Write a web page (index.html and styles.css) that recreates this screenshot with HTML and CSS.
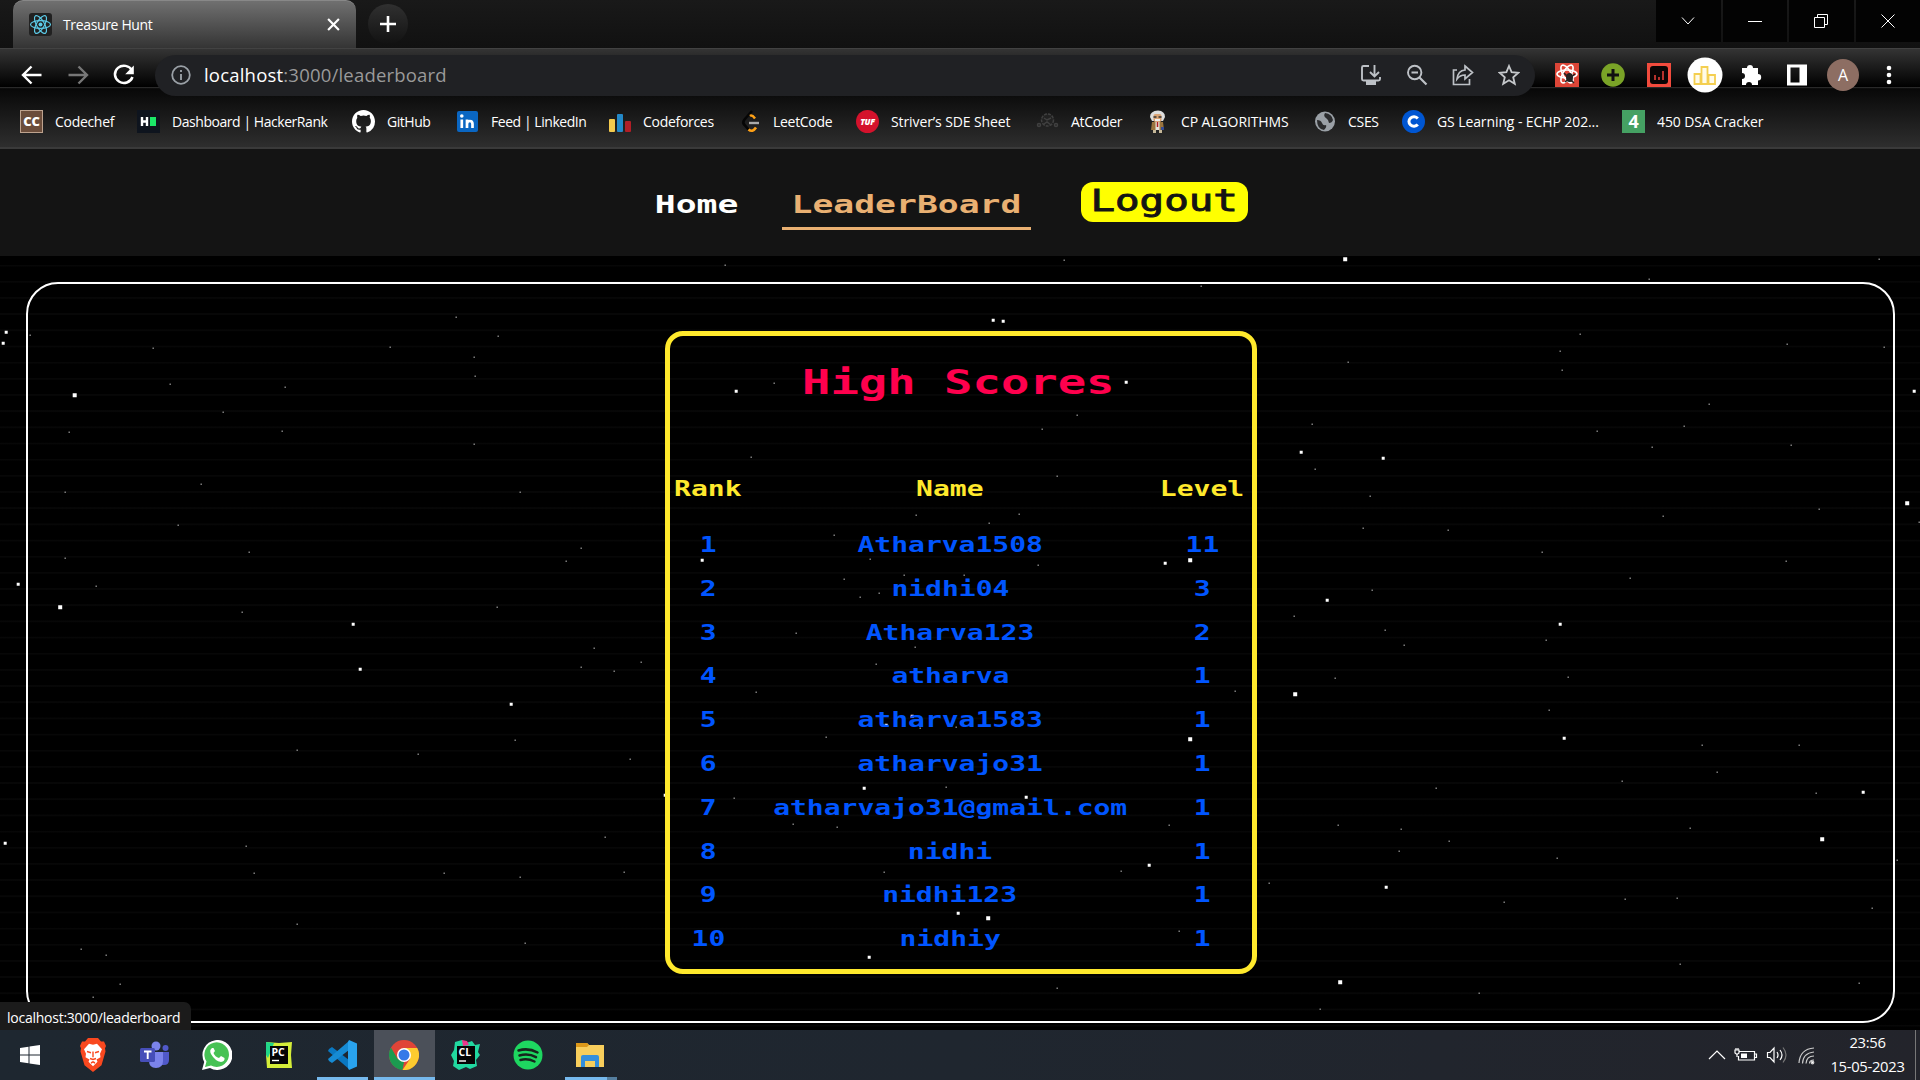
FILE: index.html
```html
<!DOCTYPE html>
<html lang="en">
<head>
<meta charset="utf-8">
<title>Treasure Hunt</title>
<link rel="stylesheet" href="styles.css">
</head>
<body>
<header class="browser">
  <div class="tabstrip">
    <div class="tab">
      <svg class="favicon" viewBox="0 0 23 23"><rect width="23" height="23" rx="3" fill="#212121"/><g fill="none" stroke="#5ccbe8" stroke-width="1.2"><ellipse cx="11.5" cy="11.5" rx="10" ry="3.9"/><ellipse cx="11.5" cy="11.5" rx="10" ry="3.9" transform="rotate(60 11.5 11.5)"/><ellipse cx="11.5" cy="11.5" rx="10" ry="3.9" transform="rotate(120 11.5 11.5)"/></g><circle cx="11.5" cy="11.5" r="2" fill="#5ccbe8"/></svg>
      <span class="tab-title">Treasure Hunt</span>
      <svg class="tab-close" viewBox="0 0 12 12"><path d="M1 1l10 10M11 1L1 11" stroke="#fff" stroke-width="2"/></svg>
    </div>
    <div class="new-tab"><svg width="18" height="18" viewBox="0 0 18 18"><path d="M9 1v16M1 9h16" stroke="#fff" stroke-width="2.6"/></svg></div>
    <div class="window-controls">
      <div class="control"><svg width="14" height="14" viewBox="0 0 14 14"><path d="M1 3.500l6 6.500 6-6.500"/></svg></div>
      <div class="control"><svg width="14" height="14" viewBox="0 0 14 14"><path d="M0 7.500h14"/></svg></div>
      <div class="control"><svg width="14" height="14" viewBox="0 0 14 14"><path d="M.5 3.500h10v10h-10zM3.500 3V.5h10v10H11"/></svg></div>
      <div class="control"><svg width="14" height="14" viewBox="0 0 14 14"><path d="M.5.5l13 13M13.500.5l-13 13"/></svg></div>
    </div>
  </div>
  <div class="toolbar">
    <div class="nav-buttons">
      <svg viewBox="0 0 24 24"><path d="M21.500 12H4M11.500 3.500L3 12l8.500 8.500" fill="none" stroke="#fff" stroke-width="2.400"/></svg>
      <svg viewBox="0 0 24 24"><path d="M2.500 12H20M12.500 3.500L21 12l-8.500 8.500" fill="none" stroke="#777" stroke-width="2.400"/></svg>
      <svg viewBox="0 0 24 24"><path d="M20 7.500A9 8.600 0 1 0 20.500 14" fill="none" stroke="#fff" stroke-width="2.500"/><path d="M21.800 2.500v8.700h-8.600z" fill="#fff"/></svg>
    </div>
    <div class="omnibox">
      <svg class="info" viewBox="0 0 20 20"><circle cx="10" cy="10" r="8.800" fill="none" stroke="#9aa0a6" stroke-width="1.800"/><path d="M10 9v6M10 5v2" stroke="#9aa0a6" stroke-width="1.900"/></svg>
      <span class="url">localhost<span class="url-path">:3000/leaderboard</span></span>
      <div class="omni-actions">
        <svg viewBox="0 0 22 22"><path d="M9 2H3.500Q2 2 2 3.500V15q0 1.500 1.500 1.500h15Q20 16.500 20 15v-2M14.500 1v11M10 8l4.500 4.500L19 8" fill="none" stroke="#bdc1c6" stroke-width="1.900"/><path d="M6 17h10v4H6z" fill="#bdc1c6"/></svg>
        <svg viewBox="0 0 22 22"><circle cx="8.700" cy="8.500" r="6.700" fill="none" stroke="#bdc1c6" stroke-width="1.900"/><path d="M5.500 8.500H12M13.500 13.500l7 7" stroke="#bdc1c6" stroke-width="2.200"/></svg>
        <svg viewBox="0 0 22 22"><path d="M5 6H1.500v14.500h16V15M13 2l7.500 6.500L13 15v-4Q8 11 5 15q1-8.500 8-9z" fill="none" stroke="#bdc1c6" stroke-width="1.700"/></svg>
        <svg viewBox="0 0 22 22"><path d="M11 2l2.600 6.200 6.700.6-5.100 4.400 1.600 6.600-5.800-3.500-5.800 3.500 1.600-6.600L1.700 8.800l6.700-.6z" fill="none" stroke="#c5c8cb" stroke-width="1.800"/></svg>
      </div>
    </div>
    <div class="extensions">
      <svg viewBox="0 0 36 36"><rect x="6" y="6" width="24" height="24" fill="#dc4537"/><g fill="none" stroke="#fff" stroke-width="1.600"><ellipse cx="18" cy="17" rx="10" ry="4"/><ellipse cx="18" cy="17" rx="10" ry="4" transform="rotate(60 18 17)"/><ellipse cx="18" cy="17" rx="10" ry="4" transform="rotate(120 18 17)"/></g><ellipse cx="20.500" cy="20.500" rx="3.500" ry="4.500" fill="#222"/><path d="M15 16l10 10M26 17l-10 8" stroke="#222" stroke-width="1.500"/></svg>
      <svg viewBox="0 0 36 36"><circle cx="18" cy="18" r="11.800" fill="#7aa327"/><path d="M18 12v12M12 18h12" stroke="#111" stroke-width="3"/></svg>
      <svg viewBox="0 0 36 36"><rect x="6" y="6" width="24" height="24" fill="#f24b3d"/><rect x="9" y="9" width="18" height="18" rx="3" fill="#0a0505"/><path d="M14 18v5M18 20v3M22 14v9" stroke="#b5312c" stroke-width="2"/></svg>
      <svg viewBox="0 0 36 36"><circle cx="18" cy="18" r="17.500" fill="#fff"/><path d="M7.500 17h6v10h-6zM14.500 10h6v17h-6zM21.500 18h6.500v9h-6.500z" fill="#fffbe8" stroke="#f4cf50" stroke-width="1.800"/></svg>
      <svg viewBox="0 0 36 36"><path d="M9 11h5a3 3 0 1 1 6 0h5v6a3.200 3.200 0 1 1 0 6.400V28h-6a3 3 0 0 0-6 0H9v-6a3 3 0 1 0 0-6z" fill="#fff"/></svg>
      <svg viewBox="0 0 36 36"><path d="M8 7.500h20v21H8zM11.500 10.500v15h9v-15z" fill="#fff" fill-rule="evenodd"/></svg>
      <svg viewBox="0 0 36 36"><circle cx="18" cy="18" r="16" fill="#8d6e63"/><text x="18" y="23.500" text-anchor="middle" font-size="16" fill="#fff">A</text></svg>
      <svg viewBox="0 0 36 36"><circle cx="18" cy="11" r="2.300" fill="#fff"/><circle cx="18" cy="18" r="2.300" fill="#fff"/><circle cx="18" cy="25" r="2.300" fill="#fff"/></svg>
    </div>
  </div>
  <div class="bookmarks">
    <div class="bookmark"><svg viewBox="0 0 23 23"><rect x=".5" y=".5" width="22" height="22" fill="#6b4d3b" stroke="#bda28e"/><text x="11.500" y="16" text-anchor="middle" font-size="13" font-weight="800" fill="#fff">CC</text></svg><span>Codechef</span></div>
    <div class="bookmark"><svg viewBox="0 0 23 23"><rect width="23" height="23" fill="#0e141e"/><path d="M5 7v9M10 7v9M5 11.500h5" stroke="#fff" stroke-width="2.400"/><path d="M13 7h6v9h-6z" fill="#1be668"/></svg><span class="tight">Dashboard | HackerRank</span></div>
    <div class="bookmark"><svg viewBox="0 0 16 16"><path fill="#fff" d="M8 0C3.580 0 0 3.580 0 8c0 3.540 2.290 6.530 5.470 7.590.4.070.55-.17.55-.38 0-.19-.01-.82-.01-1.490-2.010.37-2.530-.49-2.690-.94-.09-.23-.48-.94-.82-1.130-.28-.15-.68-.52-.01-.53.630-.01 1.080.58 1.230.82.720 1.210 1.870.87 2.330.66.070-.52.280-.87.510-1.070-1.780-.2-3.640-.89-3.640-3.950 0-.87.310-1.590.82-2.150-.08-.2-.36-1.020.08-2.120 0 0 .67-.21 2.200.82a7.600 7.600 0 0 1 4 0c1.530-1.040 2.200-.82 2.200-.82.440 1.100.160 1.920.08 2.120.510.56.820 1.270.82 2.150 0 3.070-1.870 3.750-3.650 3.950.290.250.540.730.540 1.480 0 1.070-.01 1.930-.01 2.200 0 .21.150.46.550.38A8.010 8.010 0 0 0 16 8c0-4.420-3.580-8-8-8z"/></svg><span class="tight">GitHub</span></div>
    <div class="bookmark"><svg viewBox="0 0 23 23"><rect x="1" y="1" width="21" height="21" rx="2" fill="#0a66c2"/><path d="M5.800 9.500V18M11 9.500V18M11 14q0-3 2.800-3 2.700 0 2.700 3v4" fill="none" stroke="#fff" stroke-width="2.700"/><circle cx="5.800" cy="6" r="1.800" fill="#fff"/></svg><span class="tight">Feed | LinkedIn</span></div>
    <div class="bookmark"><svg viewBox="0 0 23 23"><rect x="1" y="9" width="6" height="13" rx="1" fill="#f4cb4e"/><rect x="9" y="4" width="6" height="18" rx="1" fill="#2389c9"/><rect x="17" y="11" width="6" height="11" rx="1" fill="#b21e26"/></svg><span>Codeforces</span></div>
    <div class="bookmark"><svg viewBox="0 0 23 23"><path d="M14 1L6.500 9.500q-2.500 3 0 5.500l4 4.500" fill="none" stroke="#050505" stroke-width="2.600"/><path d="M12 6q2-1.500 5 2.500M10.500 19.500q4 3.500 7.500-2" fill="none" stroke="#ffa116" stroke-width="2.500"/><path d="M11 13h10" stroke="#aaa" stroke-width="2.400"/></svg><span>LeetCode</span></div>
    <div class="bookmark"><svg viewBox="0 0 23 23"><circle cx="11.500" cy="11.500" r="11.500" fill="#d4122c"/><text x="11.500" y="14.800" text-anchor="middle" font-size="8.500" font-weight="800" font-style="italic" fill="#fff">TUF</text></svg><span class="loose">Striver’s SDE Sheet</span></div>
    <div class="bookmark"><svg viewBox="0 0 23 23"><g fill="none" stroke="#404040" stroke-width="1.500"><circle cx="11.500" cy="10" r="6" fill="#222" stroke-dasharray="3 1"/><path d="M8 8l3 2 4-2M8 14l3-2 4 3"/><circle cx="3" cy="15" r="1.500"/><circle cx="20" cy="15" r="1.500"/></g></svg><span>AtCoder</span></div>
    <div class="bookmark"><svg viewBox="0 0 23 23"><path d="M4 7q0-6 8-6.500Q19 1 19 7l-2 4H6z" fill="#ddd"/><rect x="7.500" y="4" width="8" height="8" rx="2" fill="#d8a273"/><path d="M7.500 7h3M12.500 7h3" stroke="#333" stroke-width="1.500"/><path d="M9 10h5" stroke="#eee" stroke-width="2"/><path d="M6 12h11l1 8H5z" fill="#9a743e"/><path d="M9.500 12h4v8h-4z" fill="#e8e4dd"/><path d="M11.500 12v5" stroke="#b02020" stroke-width="1.500"/><path d="M7 20h3v3H7zM13 20h3v3h-3z" fill="#c5b798"/><path d="M15 17h3v3h-3z" fill="#364c93"/></svg><span class="loose">CP ALGORITHMS</span></div>
    <div class="bookmark"><svg viewBox="0 0 23 23"><circle cx="12" cy="11.500" r="10" fill="#9aa0a6"/><path d="M4 10q4 0 5 3t4 2q1 2-2 5-7-1-7-10zM12 3q-2 3 1 5t3 5q3 0 4-3-1-6-8-7z" fill="#2a2b2d"/></svg><span>CSES</span></div>
    <div class="bookmark"><svg viewBox="0 0 23 23"><circle cx="11.500" cy="11.500" r="11.500" fill="#0056d2"/><path d="M15.800 8.500a5 4.700 0 1 0 0 6" fill="none" stroke="#fff" stroke-width="3"/></svg><span class="loose">GS Learning - ECHP 202...</span></div>
    <div class="bookmark"><svg viewBox="0 0 23 23"><rect width="23" height="23" fill="#45a163"/><text x="11.500" y="18" text-anchor="middle" font-size="18" font-weight="700" fill="#fff">4</text></svg><span class="loose">450 DSA Cracker</span></div>
  </div>
</header>

<nav class="site-nav">
  <a class="link home"><span class="pixel">Home</span></a>
  <a class="link active"><span class="pixel">LeaderBoard</span></a>
  <button class="logout"><span class="pixel">Logout</span></button>
</nav>

<main class="space">
  <svg class="stars" viewBox="-0.2 255.8 1920 774" fill="none" stroke-linecap="square">
    <path class="star-s" d="M456 317h0M498 336h0M390 347h0M474 357h0M30 335h0M153 348h0M475 376h0M170 384h0M285 387h0M223 412h0M69 432h0M282 431h0M474 444h0M201 484h0M65 492h0M520 492h0M178 525h0M249 552h0M65 558h0M581 548h0M566 561h0M96 586h0M242 612h0M497 607h0M594 648h0M641 662h0M581 667h0M614 671h0M515 740h0M297 750h0M418 754h0M630 759h0M605 837h0M246 846h0M254 873h0M444 873h0M520 877h0M624 872h0M297 924h0M525 943h0M81 949h0M106 955h0M120 984h0M93 997h0M1879 259h0M1649 279h0M1580 334h0M1560 351h0M1562 370h0M1348 362h0M1787 344h0M1884 347h0M1709 404h0M1312 424h0M1684 426h0M1597 431h0M1652 447h0M1791 445h0M1315 469h0M1370 496h0M1819 509h0M1663 516h0M1363 528h0M1448 530h0M1919 522h0M1542 552h0M1786 561h0M1630 578h0M1372 590h0M1294 616h0M1385 630h0M1404 645h0M1546 640h0M1335 678h0M1568 677h0M1549 710h0M1702 745h0M1799 745h0M1717 772h0M1622 781h0M1436 788h0M1816 793h0M1338 825h0M1401 829h0M1690 828h0M1449 841h0M1399 851h0M1557 858h0M1897 860h0M1269 883h0M1504 902h0M1625 899h0M1677 898h0M1872 908h0M1680 964h0M1859 983h0M1479 993h0M1320 1009h0M774 383h0M902 375h0M1077 415h0M1042 429h0M751 457h0M1057 476h0M916 515h0M1019 514h0M989 523h0M834 535h0M870 559h0M1038 565h0M904 575h0M964 575h0M844 579h0M879 593h0M860 597h0M796 633h0M915 647h0M876 664h0M756 692h0M1235 691h0M920 728h0M956 727h0M826 737h0M946 787h0M734 798h0M793 824h0M837 827h0M1169 825h0M884 872h0M1121 871h0M1179 931h0M1057 988h0M725 265h0M1064 260h0M1201 286h0"/>
    <path class="star-m" d="M6 332h0M3 343h0M18 584h0M353 624h0M360 669h0M511 704h0M5 843h0M1914 391h0M1301 452h0M1383 458h0M1327 600h0M1560 624h0M1564 738h0M1863 792h0M1386 887h0M993 320h0M1003 321h0M736 391h0M1126 382h0M702 560h0M1165 563h0M912 716h0M886 725h0M864 788h0M1026 797h0M665 795h0M1149 865h0M958 913h0M869 957h0"/>
    <path class="star-l" d="M74.500 395h0M60 607h0M1345 259h0M1907 503h0M1295 694h0M1822 839h0M1340 982h0M1190 560h0M1190 739h0M988 918h0"/>
  </svg>
  <div class="frame">
    <section class="card">
      <h1 class="card-title"><span class="pixel">High Scores</span></h1>
      <div class="row head"><span class="pixel">Rank</span><span class="pixel">Name</span><span class="pixel">Level</span></div>
      <div class="row"><span class="pixel">1</span><span class="pixel">Atharva1508</span><span class="pixel">11</span></div>
      <div class="row"><span class="pixel">2</span><span class="pixel">nidhi04</span><span class="pixel">3</span></div>
      <div class="row"><span class="pixel">3</span><span class="pixel">Atharva123</span><span class="pixel">2</span></div>
      <div class="row"><span class="pixel">4</span><span class="pixel">atharva</span><span class="pixel">1</span></div>
      <div class="row"><span class="pixel">5</span><span class="pixel">atharva1583</span><span class="pixel">1</span></div>
      <div class="row"><span class="pixel">6</span><span class="pixel">atharvajo31</span><span class="pixel">1</span></div>
      <div class="row"><span class="pixel">7</span><span class="pixel">atharvajo31@gmail.com</span><span class="pixel">1</span></div>
      <div class="row"><span class="pixel">8</span><span class="pixel">nidhi</span><span class="pixel">1</span></div>
      <div class="row"><span class="pixel">9</span><span class="pixel">nidhi123</span><span class="pixel">1</span></div>
      <div class="row"><span class="pixel">10</span><span class="pixel">nidhiy</span><span class="pixel">1</span></div>
    </section>
  </div>
  <div class="status"><span>localhost:3000/leaderboard</span></div>
</main>

<footer class="taskbar">
  <div class="task"><svg width="20" height="20" viewBox="0 0 20 20"><path d="M0 3l8.500-1.200v7.700H0zM9.500 1.600L20 0v9.500H9.500zM0 10.500h8.500v7.700L0 17zM9.500 10.500H20V20L9.500 18.400z" fill="#fff"/></svg></div>
  <div class="task"><svg width="28" height="34" viewBox="0 0 28 30" preserveAspectRatio="none"><path d="M9 0h10l3 3 3 0 2 4-1 2 .5 3-4 12L14 30 5.500 24l-4-12L2 9 1 7l2-4h3z" fill="#f9481f"/><path d="M14 6l4-1 5 5-2 4 .5 3-4 2 1 2-4.500 4-4.500-4 1-2-4-2 .5-3-2-4 5-5z" fill="#fff"/><path d="M8 12l4 1M20 12l-4 1M14 12v5M11 18l3 1 3-1M12 22l2-1 2 1" fill="none" stroke="#f9481f" stroke-width="1.400"/></svg></div>
  <div class="task"><svg width="30" height="28" viewBox="0 0 30 28"><circle cx="16" cy="5" r="4.500" fill="#7b83eb"/><circle cx="25.500" cy="7" r="3" fill="#5059c9"/><path d="M22 11h7v8q0 5-5 5h-3z" fill="#5059c9"/><path d="M9 11h14v9q0 7-7 7t-7-7z" fill="#7b83eb"/><rect y="7" width="15" height="14" rx="1.500" fill="#464eb8"/><path d="M4 10.500h7.500M7.700 10.500V18" stroke="#fff" stroke-width="1.900"/></svg></div>
  <div class="task"><svg width="30" height="30" viewBox="0 0 30 30"><path d="M0 30l2.200-8A15 15 0 1 1 8 28z" fill="#fff"/><path d="M3 27l1.500-5.500A12.300 12.300 0 1 1 9 25.500z" fill="#46c254"/><path d="M10 8q-3 2-1 6 4 7 10 8 4-.5 3.500-4L19 16l-2 2q-4-1-5.500-5l1.500-2-1.500-3z" fill="#fff"/></svg></div>
  <div class="task"><svg width="28" height="28" viewBox="0 0 28 28"><path d="M1 1l13 1 13-1-1 13 1 13H2L1 14z" fill="#d5ed39"/><path d="M1 1l8 1L3 17 1 14z" fill="#21d789"/><rect x="5" y="5" width="18" height="18" fill="#050505"/><text x="6.500" y="14.500" font-size="10.500" font-weight="700" fill="#fff">PC</text><path d="M7 19.500h7" stroke="#fff" stroke-width="1.400"/></svg></div>
  <div class="task open vscode"><svg width="30" height="30" viewBox="0 0 30 30"><path d="M2 9l3-2 17 13v9L1 11z" fill="#0a78c2"/><path d="M2 21l3 2 17-13V1L1 19z" fill="#168bd4"/><path d="M22 0l8 3.500v23L22 30l-1-2V2z" fill="#29a3ee"/></svg></div>
  <div class="task open current"><svg width="30" height="30" viewBox="0 0 30 30"><circle cx="15" cy="15" r="15" fill="#e04437"/><path d="M2 7.500L8.500 18.700 15 22l-1.500 8A15 15 0 0 1 2 7.500z" fill="#1b9b50"/><path d="M15 8h13.200A15 15 0 0 1 13.500 30l7.500-11z" fill="#fdcb2f"/><circle cx="15" cy="15" r="7" fill="#fff"/><circle cx="15" cy="15" r="5.500" fill="#3579e8"/></svg></div>
  <div class="task"><svg width="30" height="30" viewBox="0 0 30 30"><path d="M4 2l7-2 4 3 6-2 3 4 5-1-2 8 2 3-4 5 1 6-7 3-4-2-7 3-6-4 1-5-3-6 3-5z" fill="#21d8a0"/><path d="M11 0l5 1 2 4-6 1z" fill="#ed358c"/><rect x="6" y="6" width="18" height="18" fill="#050505"/><text x="7.500" y="15.500" font-size="10.500" font-weight="700" fill="#fff">CL</text><path d="M8 21h7" stroke="#fff" stroke-width="1.400"/></svg></div>
  <div class="task"><svg width="30" height="30" viewBox="0 0 30 30"><circle cx="15" cy="15" r="14.500" fill="#1ed760"/><path d="M5.500 10.500q10-3 19 2M6.500 15.500q9-2.500 16.500 1.700M7.500 20q7-2 14 1.500" fill="none" stroke="#17251d" stroke-width="2.500" stroke-linecap="round"/></svg></div>
  <div class="task open explorer"><svg width="28" height="24" viewBox="0 0 28 24"><path d="M0 0h11l2 2h15v22H0z" fill="#f8ce5c"/><path d="M0 0h11l2 2-2 2H0z" fill="#dc9819"/><path d="M5 24V14q0-2 2-2h14q2 0 2 2v10h-4v-6h-10v6z" fill="#358fdc"/></svg></div>
  <div class="tray">
    <svg width="30" height="20" viewBox="0 0 30 20"><path d="M7 14l8-8 8 8"/></svg>
    <svg width="30" height="20" viewBox="0 0 30 20"><path d="M7 6.500h15.500v8.500H6.500V11M23 9h1.500v3.500H23M3 5h4v3l-2 1.500L3 8zM4 5V3M6 5V3M5 9v3"/><path d="M9 8.500h6v4.500H9z" fill="#fff" stroke="none"/></svg>
    <svg width="30" height="20" viewBox="0 0 30 20"><path d="M5.500 7.500H8L12 3v14l-4-4.500H5.500zM15 7q2 3 0 6M18 5q4 5 0 10"/><path d="M21 2.500q6 7.500 0 15" stroke="#777"/></svg>
    <svg class="wifi" width="30" height="20" viewBox="0 0 30 20"><path d="M7 18Q8 4 22 3M10.500 18.500Q11 8 22 7M14 18.500Q14.500 11 22 11M17.500 18.500Q17.500 15 22 15"/><circle cx="20.500" cy="17.500" r="1.300" fill="#fff"/></svg>
    <div class="clock"><span>23:56</span><span>15-05-2023</span></div>
  </div>
</footer>
</body>
</html>
```
FILE: styles.css
```css
* { box-sizing: border-box; }
body {
  margin: 0;
  width: 1920px;
  height: 1080px;
  overflow: hidden;
  display: flex;
  flex-direction: column;
  background: #000;
  color: #fff;
  font-family: "Open Sans", "Noto Sans", sans-serif;
}
svg { display: block; flex: none; }
span { white-space: nowrap; }

/* Browser chrome */
.browser { height: 149px; flex: none; background: #141414; }
.tabstrip { height: 48px; display: flex; align-items: flex-start; padding-left: 13px; background: linear-gradient(#191919, #111); }
.tab {
  width: 343px; height: 48px;
  display: flex; align-items: center;
  padding: 0 16px 0 16px;
  border-radius: 10px 10px 0 0;
  border-top: 1px solid #888;
  background: linear-gradient(#707070, #343434);
}
.favicon { width: 23px; height: 23px; }
.tab-title { margin-left: 11px; font-size: 14px; letter-spacing: -0.35px; }
.tab-close { width: 13px; height: 13px; margin-left: auto; }
.new-tab {
  width: 40px; height: 40px; margin: 4px 0 0 12px;
  display: grid; place-items: center;
  border-radius: 50%;
  background: linear-gradient(#303030, #121212);
}
.window-controls { display: flex; gap: 2px; margin-left: auto; }
.control { width: 64.500px; height: 42px; display: grid; place-items: center; background: #030303; }
.control svg { fill: none; stroke: #fff; stroke-width: 1; }
.toolbar {
  height: 41px; display: flex; align-items: flex-start;
  padding: 6px 13px 0 20px;
  border-top: 1px solid #424242;
  background: linear-gradient(#343434, #000 95%, #2c2c2c 96%, #000);
}
.nav-buttons { display: flex; gap: 22px; height: 41px; align-items: center; width: 135px; padding-bottom: 2px; }
.nav-buttons svg { width: 24px; height: 24px; }
.omnibox {
  width: 1380px; height: 41px;
  display: flex; align-items: center;
  padding: 0 15px 2px 16px;
  border-radius: 21px;
  background: #202124;
  position: relative;
}
.info { width: 20px; height: 20px; }
.url { margin-left: 13px; font-size: 18.500px; letter-spacing: 0.200px; }
.url-path { color: #9a9a9a; }
.omni-actions { margin-left: auto; display: flex; gap: 24px; }
.omni-actions svg { width: 22px; height: 22px; }
.extensions { position: relative; display: flex; gap: 10px; margin-left: 14px; height: 41px; align-items: center; padding-bottom: 2px; }
.extensions svg { width: 36px; height: 36px; }
.bookmarks {
  height: 60px;
  display: grid;
  grid-template-columns: 117px 215px 104px 152px 130px 118px 180px 110px 167px 89px 220px 170px;
  align-items: center;
  padding: 7px 0 0 20px;
  border-bottom: 2px solid #3a3a3a;
  background: linear-gradient(#080808, #2e2e2e);
}
.bookmark { display: flex; align-items: center; gap: 12px; font-size: 14px; letter-spacing: -0.3px; }
.bookmark svg { width: 23px; height: 23px; }
.tight { letter-spacing: -0.45px; }
.loose { letter-spacing: -0.1px; }

/* Wide retro lettering */
.pixel {
  display: inline-block;
  font-family: "DejaVu Sans Mono", monospace;
  font-weight: 700;
  line-height: 1;
  transform: scaleX(1.36);
}

/* Site navigation */
.site-nav {
  height: 107px; flex: none;
  display: flex; align-items: flex-start; justify-content: flex-start;
  padding: 33px 0 0 634px;
  background: #141414;
}
.link {
  height: 48px; padding-top: 5px; text-align: center;
  font-size: 24.600px; color: #fff;
  border-bottom: 3px solid transparent;
}
.link .pixel { transform: scaleX(1.41); }
.home { width: 125px; }
.active { width: 249px; margin-left: 23px; color: #e9b072; border-bottom-color: #e9b072; }
.logout {
  width: 167px; height: 40px; margin-left: 50px; padding: 0 0 3px;
  border: 0; border-radius: 12px;
  background: #ff0; color: #141414; font-size: 30px;
}
.logout .pixel { font-weight: 400; -webkit-text-stroke: 0.900px #141414; }

/* Leaderboard */
.space {
  height: 774px; flex: none;
  padding: 26px 25px 0 26px;
  position: relative;
  background: repeating-linear-gradient(#000 0 8.500px, #070707 9px 10px, #000 11px 16.170px);
}
.stars { position: absolute; inset: 0; width: 1920px; height: 774px; }
.star-s { stroke: #858585; stroke-width: 1.400px; }
.star-m { stroke: #fff; stroke-width: 3px; }
.star-l { stroke: #fff; stroke-width: 4px; }
.frame {
  height: 741px;
  border: 2px solid #fff; border-radius: 32px;
  display: flex; justify-content: center; align-items: flex-start;
  padding-top: 47px;
}
.card {
  position: relative;
  width: 592px; height: 643px;
  border: 5px solid #ffe92c; border-radius: 18px;
  color: #0055ff;
}
.card-title {
  height: 132.500px; margin: 0; padding: 29px 5px 0 0;
  text-align: center; font-size: 33px; line-height: 1; color: #ff004d;
}
.card-title .pixel { transform: scaleX(1.43); }
.row {
  height: 43.800px;
  display: grid; grid-template-columns: 78px 405px 99px;
  align-items: center; justify-items: center;
  font-size: 20.600px;
}
.head { height: 55px; padding-bottom: 13px; color: #ffe92c; }
.head .pixel:first-child { margin-right: 1px; }
.status {
  position: absolute; left: 0; bottom: 0;
  width: 191px; height: 28px; padding: 5px 0 0 7px;
  border-radius: 0 7px 0 0;
  background: #1b1b1b;
  font-size: 14px; line-height: 21px; letter-spacing: -0.25px;
}

/* Taskbar */
.taskbar { height: 50px; flex: none; display: flex; background: linear-gradient(90deg, #1e2730, #1f262f 50%, #23242b); }
.task { width: 62px; display: grid; place-items: center; border-bottom: 3px solid transparent; padding-top: 2px; }
.task:first-child svg { margin-right: 2px; }
.open { border-bottom-color: #76b9ed; }
.vscode { width: 51px; margin: 0 6px 0 7px; }
.vscode svg { margin-right: 2px; }
.current { width: 61px; background: #4b5059; border-bottom-color: #76b9ed; }
.current svg { margin-right: 2px; }
.explorer { width: 52px; margin-left: 6px; border-image: linear-gradient(90deg, #76b9ed 78%, #557f9f 78%) 3; border-style: solid; border-width: 0 0 3px; }
.explorer svg { margin-right: 2px; }
.tray { margin-left: auto; width: 218px; display: flex; align-items: center; }
.tray svg { fill: none; stroke: #fff; stroke-width: 1.200; }
.tray .wifi { stroke: #ccc; }
.clock {
  width: 94px; height: 50px;
  display: flex; flex-direction: column; align-items: center;
  padding: 0 2px 0 0;
  border-right: 1px solid #777;
  font-size: 14.800px; line-height: 24px; letter-spacing: -0.3px;
}
```
